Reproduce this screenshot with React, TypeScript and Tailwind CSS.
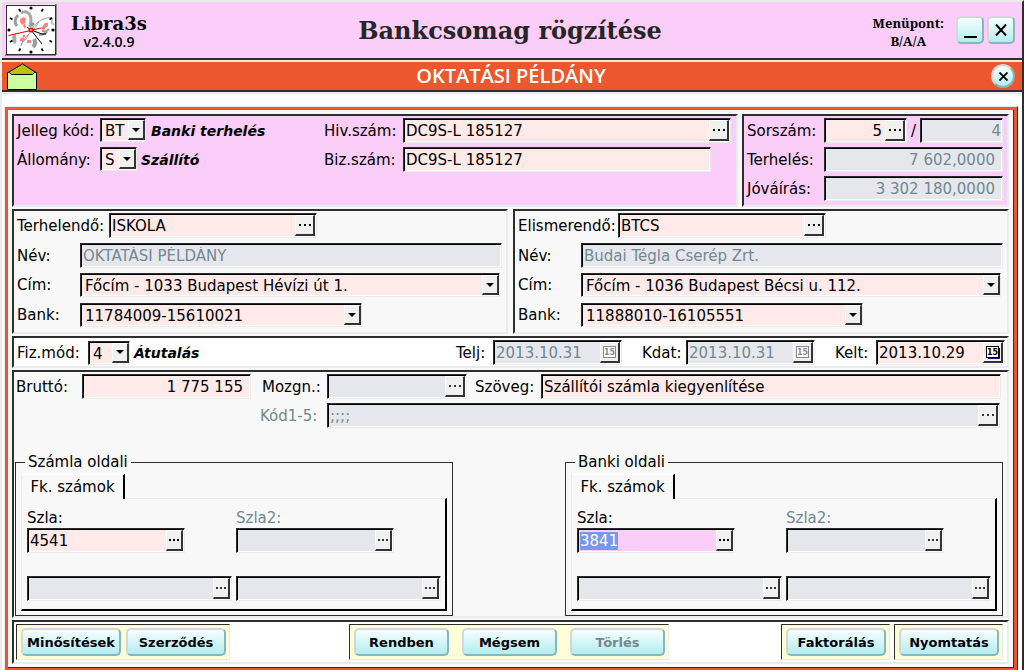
import React, { useEffect, useRef } from "react";
import clsx from "clsx";

type Tone = "rose" | "grey" | "pink";

const TONES: Record<Tone, string> = {
  rose: "bg-[#ffeaea] text-black",
  grey: "bg-[#e6e7ed] text-[#71898f]",
  pink: "bg-[#fbcdf9] text-black",
};

const SUNKEN =
  "border border-t-[#2b2b2b] border-l-[#2b2b2b] border-r-[#ebebeb] border-b-[#ebebeb] shadow-[inset_1px_1px_0_#000,inset_-1px_-1px_0_#fff]";

const PANEL =
  "border-2 border-t-[#2e2e2e] border-l-[#2e2e2e] border-r-[#ebebeb] border-b-[#ebebeb]";

const RAISED =
  "border-t border-l border-r-2 border-b-2 border-t-white border-l-white border-r-[#333] border-b-[#333] bg-[#f0f0f0]";

const AQUA =
  "border-2 border-t-[#d6d6d6] border-l-[#d6d6d6] border-r-[#86b8bb] border-b-[#86b8bb] bg-linear-to-b from-[#f6fefe] to-[#b2edf0]";

function Dots({ dim, slim }: { dim?: boolean; slim?: boolean }) {
  const fill = dim ? "#333" : "#000";
  return slim ? (
    <svg width="10" height="2" viewBox="0 0 10 2" fill={fill} aria-hidden="true">
      <rect x="0" width="2" height="2" />
      <rect x="4" width="2" height="2" />
      <rect x="8" width="2" height="2" />
    </svg>
  ) : (
    <svg width="12" height="2" viewBox="0 0 12 2" fill={fill} aria-hidden="true">
      <rect x="0" width="2" height="2" />
      <rect x="5" width="2" height="2" />
      <rect x="10" width="2" height="2" />
    </svg>
  );
}

function CalendarIcon({ dim }: { dim?: boolean }) {
  const ink = dim ? "#8a8a8a" : "#000";
  return (
    <svg width="14" height="13" viewBox="0 0 14 13" aria-hidden="true">
      {!dim && <path d="M2 12.5h11.5V2" fill="none" stroke="#000080" strokeWidth="1" />}
      <rect x="0.5" y="0.5" width="12" height="11" fill="#fff" stroke={ink} />
      <text x="6.5" y="9" textAnchor="middle" fontSize="8" fontWeight="700" fill={ink}>
        15
      </text>
    </svg>
  );
}

interface FieldProps {
  id: string;
  value?: string;
  tone?: Tone;
  className?: string;
  inputClass?: string;
  action?: "dots" | "calendar";
  slim?: boolean;
  label?: string;
  selected?: boolean;
}

function Field({ id, value = "", tone = "rose", className, inputClass, action, slim, label, selected }: FieldProps) {
  const ref = useRef<HTMLInputElement>(null);
  useEffect(() => {
    if (selected && ref.current) {
      ref.current.focus();
      ref.current.select();
    }
  }, [selected]);
  const dim = tone === "grey";
  return (
    <div className={clsx("flex h-[25px] min-w-0 p-px", SUNKEN, TONES[tone], className)}>
      <input
        ref={ref}
        id={id}
        aria-label={label}
        defaultValue={value}
        className={clsx(
          "h-full w-full min-w-0 bg-transparent pl-px text-[15px] outline-none selection:bg-[#7798ec] selection:text-white",
          inputClass,
        )}
      />
      {action && (
        <button
          type="button"
          aria-label={action === "dots" ? "Keresés" : "Naptár"}
          className={clsx("flex shrink-0 items-center justify-center", RAISED, slim ? "w-[17px]" : "w-5")}
        >
          {action === "dots" ? <Dots dim={dim} slim={slim} /> : <CalendarIcon dim={dim} />}
        </button>
      )}
    </div>
  );
}

function Combo({ id, value, className }: { id: string; value: string; className?: string }) {
  return (
    <div className={clsx("relative h-6 bg-[#ffeaea] p-px", SUNKEN, className)}>
      <select
        id={id}
        defaultValue={value}
        className="block h-full w-full appearance-none bg-transparent pt-px pl-[3px] text-[15px] leading-5 outline-none"
      >
        <option>{value}</option>
      </select>
      <span
        className={clsx("pointer-events-none absolute top-px right-0 bottom-px flex w-[17px] items-center justify-center", RAISED)}
      >
        <svg width="8" height="4" viewBox="0 0 8 4" aria-hidden="true">
          <path d="M0 0h8L4 4z" />
        </svg>
      </span>
    </div>
  );
}

function Label({ htmlFor, className, children }: { htmlFor: string; className?: string; children: React.ReactNode }) {
  return (
    <label htmlFor={htmlFor} className={clsx("shrink-0 whitespace-nowrap", className)}>
      {children}
    </label>
  );
}

function Action({ children, className, disabled }: { children: string; className: string; disabled?: boolean }) {
  return (
    <button
      type="button"
      disabled={disabled}
      className={clsx(
        "h-7 rounded-[5px] pt-px text-[13px] font-bold whitespace-nowrap disabled:text-[#71898f]",
        AQUA,
        className,
      )}
    >
      {children}
    </button>
  );
}

function ActionGroup({ children, className }: { children: React.ReactNode; className?: string }) {
  return (
    <div
      className={clsx(
        "flex border border-t-[#2e2e2e] border-l-[#2e2e2e] border-r-[#ebebeb] border-b-[#ebebeb] bg-[#fdfdd8] p-[3px] pl-1",
        className,
      )}
    >
      {children}
    </div>
  );
}

function Logo() {
  return (
    <svg width="52" height="52" viewBox="0 0 52 52" className="shrink-0" aria-hidden="true">
      <rect width="52" height="52" fill="#ebebeb" />
      <rect x="1.5" y="1.5" width="49" height="49" fill="#fff" stroke="#2e2e2e" />
      <path d="M51 0v51H0" fill="none" stroke="#2e2e2e" strokeWidth="1" />
      <g fill="none" stroke="#9c9c9c">
        <path d="M12 22c-3-3-2-8 1-11" strokeWidth="3" />
        <path d="M16 9c5-3 10 0 10 7 0 3-1 5-1 7" strokeWidth="3" stroke="#a8a8a8" />
        <path d="M27 24c3-2 4-5 9-8 5-2 8-3 11-2M29 25l5-7" strokeWidth="1" />
        <path d="M46 18l3 3M47 14v4" strokeWidth="2" stroke="#c4c4c4" />
        <path d="M37 27c4 1 5 0 7-2M34 31c4 0 6-1 8-3" strokeWidth="2" />
        <path d="M26 27c-3 5-8 8-10 15M24 30c-2 5-6 8-8 10" strokeWidth="1" />
        <path d="M9 31c1 3-1 6 2 7" strokeWidth="4" stroke="#a8a8a8" />
        <path d="M29 35c2 3 1 6-1 8" strokeWidth="4" />
        <path d="M26 22l3-3" strokeWidth="3" />
      </g>
      <g fill="#f9827c">
        <path d="M15 15l4-2 2 2-1 4-3 2-2-3zM19 19l2 3-1 3-2-3z" />
        <path d="M37 23l3-4 3 0 0 3-3 2-1 3-2-2z" />
        <path d="M15 35l3-2 2 2-2 3-3-1zM22 36h4v3h-4zM18 31h2v2h-2z" />
      </g>
      <path d="M26 26l-4-3M26 26l11 14M26 26l11 4h4" fill="none" stroke="#000" />
      <path d="M3.500 31.500l22-5L36 24" fill="none" stroke="#f00" strokeWidth="1.200" />
      <circle cx="26" cy="26" r="2.500" fill="#f00" />
      <circle cx="26" cy="26" r="0.800" fill="#fff" />
      <g fill="#000">
        <circle cx="26" cy="4" r="1.600" />
        <circle cx="26" cy="48" r="1.600" />
        <circle cx="4" cy="26" r="1.600" />
        <circle cx="48" cy="26" r="1.600" />
      </g>
      <path
        d="M14 5l1.500 2.500M38 5l-1.500 2.500M5 14l2.500 1.500M47 14l-2.500 1.500M5 38l2.500-1.500M47 38l-2.500-1.500M14 47l1.500-2.500M38 47l-1.500-2.500"
        stroke="#000"
        strokeWidth="1.800"
      />
    </svg>
  );
}

function Envelope() {
  return (
    <svg width="30" height="27" viewBox="0 0 30 27" aria-hidden="true">
      <path d="M1 9.500L15.500 1 29 9.500v3H1z" fill="#b8c40a" stroke="#000" />
      <path d="M0.500 9.500h2l2 2h21l2-2h2v17h-29z" fill="#ccff9f" stroke="#000" />
    </svg>
  );
}

function PartyPanel(props: {
  prefix: string;
  title: string;
  titleClass: string;
  code: string;
  name: string;
  address: string;
  bank: string;
}) {
  const { prefix, title, titleClass, code, name, address, bank } = props;
  return (
    <section className={clsx("flex flex-col gap-[5px] pt-0.5 pr-1 pb-1 pl-[3px]", PANEL)}>
      <div className="flex items-center">
        <Label htmlFor={prefix + "-code"} className={titleClass}>{title}</Label>
        <Field id={prefix + "-code"} value={code} action="dots" className="w-[208px]" />
      </div>
      <div className="flex items-center">
        <Label htmlFor={prefix + "-name"} className="w-[63px]">Név:</Label>
        <Field id={prefix + "-name"} value={name} tone="grey" className="flex-1" />
      </div>
      <div className="flex h-[25px] items-start">
        <Label htmlFor={prefix + "-address"} className="w-[63px]">Cím:</Label>
        <Combo id={prefix + "-address"} value={address} className="mr-0.5 flex-1" />
      </div>
      <div className="flex h-[25px] items-start">
        <Label htmlFor={prefix + "-bank"} className="w-[63px]">Bank:</Label>
        <Combo id={prefix + "-bank"} value={bank} className="w-[282px]" />
      </div>
    </section>
  );
}

function AccountGroup({ prefix, title, value, selected }: { prefix: string; title: string; value: string; selected?: boolean }) {
  return (
    <fieldset className="w-[438px] border border-[#2e2e2e] px-[5px] pb-1">
      <legend className="ml-1 px-[3px] leading-5">{title}</legend>
      <div role="tablist" className="mt-0.5 flex">
        <button
          type="button"
          role="tab"
          aria-selected="true"
          className="relative z-10 -mb-px h-[25px] w-[104px] border-t border-r-2 border-l border-t-white border-r-black border-l-[#ebebeb] bg-[#f8f8f8] text-center leading-5"
        >
          Fk. számok
        </button>
      </div>
      <div
        role="tabpanel"
        className="grid grid-cols-[205px_205px] gap-x-1 border-t border-r-2 border-b-2 border-l border-t-[#ebebeb] border-r-black border-b-black border-l-[#ebebeb] pt-[9px] pb-2 pl-[5px]"
      >
        <div>
          <Label htmlFor={prefix + "-a"} className="block leading-5">Szla:</Label>
          <Field id={prefix + "-a"} value={value} tone={selected ? "pink" : "rose"} selected={selected} action="dots" slim className="w-[158px]" />
        </div>
        <div>
          <Label htmlFor={prefix + "-b"} className="block leading-5 text-[#71898f]">Szla2:</Label>
          <Field id={prefix + "-b"} tone="grey" action="dots" slim className="w-[158px]" />
        </div>
        <Field id={prefix + "-c"} label="Szla név" tone="grey" action="dots" slim className="mt-[23px]" />
        <Field id={prefix + "-d"} label="Szla2 név" tone="grey" action="dots" slim className="mt-[23px]" />
      </div>
    </fieldset>
  );
}

export default function App() {
  return (
    <div className="flex min-h-screen flex-col border-t-2 border-r-2 border-l-2 border-t-[#ebebeb] border-r-[#2e2e2e] border-l-[#ebebeb] bg-white font-['DejaVu_Sans',sans-serif] text-[15px] leading-6 text-black">
      <header className="grid h-[58px] grid-cols-[1fr_auto_1fr] items-center border-b-2 border-[#2e2e2e] bg-[#fbcdf9] pr-[7px] pl-[3px]">
        <div className="flex items-center">
          <Logo />
          <div className="ml-[14px] pt-1 text-center">
            <div className="font-['DejaVu_Serif',serif] text-[18px] leading-5 font-bold">Libra3s</div>
            <div className="font-['Open_Sans',sans-serif] text-[14px] leading-4 font-semibold">v2.4.0.9</div>
          </div>
        </div>
        <h1 className="pt-0.5 font-['DejaVu_Serif',serif] text-[24px] font-bold text-[#262626]">Bankcsomag rögzítése</h1>
        <div className="flex items-center justify-end">
          <div className="mr-3 pt-1 text-center font-['Noto_Serif','DejaVu_Serif',serif] text-[13px] leading-[18px] font-bold">
            Menüpont:
            <br />
            B/A/A
          </div>
          <button type="button" aria-label="Kis méret" className={clsx("mr-[3px] flex size-7 items-end justify-center rounded-[5px] pb-1", AQUA)}>
            <svg width="13" height="2" aria-hidden="true"><rect width="13" height="2" /></svg>
          </button>
          <button type="button" aria-label="Bezárás" className={clsx("flex size-7 items-center justify-center rounded-[5px]", AQUA)}>
            <svg width="12" height="12" viewBox="0 0 12 12" aria-hidden="true">
              <path d="M1 0.500l10 11M11 0.500l-10 11" stroke="#000" strokeWidth="2" />
            </svg>
          </button>
        </div>
      </header>
      <div className="h-0.5 bg-[#ebebeb]" />

      <div className="grid h-[30px] grid-cols-[1fr_auto_1fr] items-center border-b-2 border-[#2e2e2e] bg-[#ec572d] pr-[7px] pl-[5px]">
        <Envelope />
        <h2 className="font-['Open_Sans',sans-serif] text-[20px] font-semibold text-white">OKTATÁSI PÉLDÁNY</h2>
        <button type="button" aria-label="Bezárás" className={clsx("flex size-6 items-center justify-center justify-self-end rounded-full", AQUA)}>
          <svg width="9" height="9" viewBox="0 0 9 9" aria-hidden="true">
            <path d="M0.500 0.500l8 8M8.500 0.500l-8 8" stroke="#000" strokeWidth="1.800" />
          </svg>
        </button>
      </div>
      <div className="h-0.5 bg-[#ebebeb]" />

      <div className="mt-3 mr-1 ml-0.5 flex flex-1 flex-col border-t border-r border-l border-t-[#ebebeb] border-r-[#2e2e2e] border-l-[#ebebeb]">
        <div className="flex flex-1 flex-col border-[3px] border-b-2 border-[#ec572d]">
          <main className="flex flex-1 flex-col gap-0.5 border-r border-b border-[#2e2e2e] bg-[#f8f8f8] px-1 pt-1 pb-[3px]">
            <div className="flex gap-1">
              <section className={clsx("flex flex-1 bg-[#fbcdf9] pt-0.5 pr-[5px] pb-1 pl-[3px]", PANEL)}>
                <div className="flex w-[307px] flex-col gap-1 leading-[26px]">
                  <div className="flex h-[25px] items-start">
                    <Label htmlFor="kind" className="w-[83px]">Jelleg kód:</Label>
                    <Combo id="kind" value="BT" className="w-[46px]" />
                    <strong className="ml-[5px] text-[14px] italic">Banki terhelés</strong>
                  </div>
                  <div className="flex h-[25px] items-start">
                    <Label htmlFor="stock" className="w-[83px]">Állomány:</Label>
                    <Combo id="stock" value="S" className="w-[37px]" />
                    <strong className="ml-1 text-[14px] italic">Szállító</strong>
                  </div>
                </div>
                <div className="flex flex-1 flex-col gap-1">
                  <div className="flex items-center">
                    <Label htmlFor="ref" className="w-[79px]">Hiv.szám:</Label>
                    <Field id="ref" value="DC9S-L 185127" action="dots" className="flex-1" />
                  </div>
                  <div className="flex items-center">
                    <Label htmlFor="doc" className="w-[79px]">Biz.szám:</Label>
                    <Field id="doc" value="DC9S-L 185127" className="mr-5 flex-1" />
                  </div>
                </div>
              </section>
              <section className={clsx("flex w-[267px] flex-col gap-1 bg-[#fbcdf9] pt-0.5 pr-1 pb-1 pl-[3px]", PANEL)}>
                <div className="flex items-center">
                  <Label htmlFor="serial" className="w-[77px]">Sorszám:</Label>
                  <Field id="serial" value="5" action="dots" className="w-[83px]" inputClass="pr-[3px] text-right" />
                  <span className="w-[13px] text-center">/</span>
                  <Field id="serial-max" label="Utolsó sorszám" value="4" tone="grey" className="flex-1" inputClass="text-right" />
                </div>
                <div className="flex items-center">
                  <Label htmlFor="debit" className="w-[77px]">Terhelés:</Label>
                  <Field id="debit" value="7 602,0000" tone="grey" className="flex-1" inputClass="pr-1.5 text-right" />
                </div>
                <div className="flex items-center">
                  <Label htmlFor="credit" className="w-[77px]">Jóváírás:</Label>
                  <Field id="credit" value="3 302 180,0000" tone="grey" className="flex-1" inputClass="pr-1.5 text-right" />
                </div>
              </section>
            </div>

            <div className="grid grid-cols-2 gap-[5px]">
              <PartyPanel
                prefix="payer"
                title="Terhelendő:"
                titleClass="w-[92px]"
                code="ISKOLA"
                name="OKTATÁSI PÉLDÁNY"
                address="Főcím - 1033 Budapest Hévízi út 1."
                bank="11784009-15610021"
              />
              <PartyPanel
                prefix="payee"
                title="Elismerendő:"
                titleClass="w-[100px]"
                code="BTCS"
                name="Budai Tégla Cserép Zrt."
                address="Főcím - 1036 Budapest Bécsi u. 112."
                bank="11888010-16105551"
              />
            </div>

            <section className={clsx("flex items-center bg-white pt-0.5 pr-0.5 pb-px pl-[3px]", PANEL)}>
              <Label htmlFor="method" className="w-[71px]">Fiz.mód:</Label>
              <Combo id="method" value="4" className="w-[42px]" />
              <strong className="ml-1 text-[14px] italic">Átutalás</strong>
              <div className="ml-auto flex gap-5">
                <div className="flex items-center">
                  <Label htmlFor="due" className="w-[37px]">Telj:</Label>
                  <Field id="due" value="2013.10.31" tone="grey" action="calendar" className="w-[129px]" />
                </div>
                <div className="flex items-center">
                  <Label htmlFor="kdat" className="w-[44px]">Kdat:</Label>
                  <Field id="kdat" value="2013.10.31" tone="grey" action="calendar" className="w-[129px]" />
                </div>
                <div className="flex items-center">
                  <Label htmlFor="dated" className="w-[41px]">Kelt:</Label>
                  <Field id="dated" value="2013.10.29" action="calendar" className="w-[129px]" />
                </div>
              </div>
            </section>

            <section className={clsx("flex flex-1 flex-col gap-1 pt-0.5", PANEL)}>
              <div className="flex items-center pr-1.5 pl-0.5">
                <Label htmlFor="gross" className="w-[66px]">Bruttó:</Label>
                <Field id="gross" value="1 775 155" className="w-[169px]" inputClass="pr-1.5 text-right" />
                <Label htmlFor="move" className="ml-[11px] w-[65px]">Mozgn.:</Label>
                <Field id="move" tone="grey" action="dots" className="w-[140px]" />
                <Label htmlFor="note" className="ml-2 w-[66px]">Szöveg:</Label>
                <Field id="note" value="Szállítói számla kiegyenlítése" className="flex-1" />
              </div>
              <div className="flex items-center pr-[7px] pl-[246px]">
                <Label htmlFor="codes" className="w-[67px] text-[#71898f]">Kód1-5:</Label>
                <Field id="codes" value=";;;;" tone="grey" action="dots" className="flex-1" />
              </div>
              <div className="mt-5 flex justify-between pr-1 pl-px">
                <AccountGroup prefix="invoice" title="Számla oldali" value="4541" />
                <AccountGroup prefix="bankside" title="Banki oldali" value="3841" selected />
              </div>
            </section>

            <footer className={clsx("flex bg-white py-0.5 pr-1 pl-0.5", PANEL)}>
              <ActionGroup className="mr-[119px] gap-[5px]">
                <Action className="w-[100px]">Minősítések</Action>
                <Action className="w-[100px]">Szerződés</Action>
              </ActionGroup>
              <ActionGroup className="gap-[13px]">
                <Action className="w-[95px]">Rendben</Action>
                <Action className="w-[95px]">Mégsem</Action>
                <Action className="w-[95px]" disabled>Törlés</Action>
              </ActionGroup>
              <ActionGroup className="mr-1 ml-auto">
                <Action className="w-[100px]">Faktorálás</Action>
              </ActionGroup>
              <ActionGroup>
                <Action className="w-[100px]">Nyomtatás</Action>
              </ActionGroup>
            </footer>
          </main>
        </div>
      </div>
    </div>
  );
}
